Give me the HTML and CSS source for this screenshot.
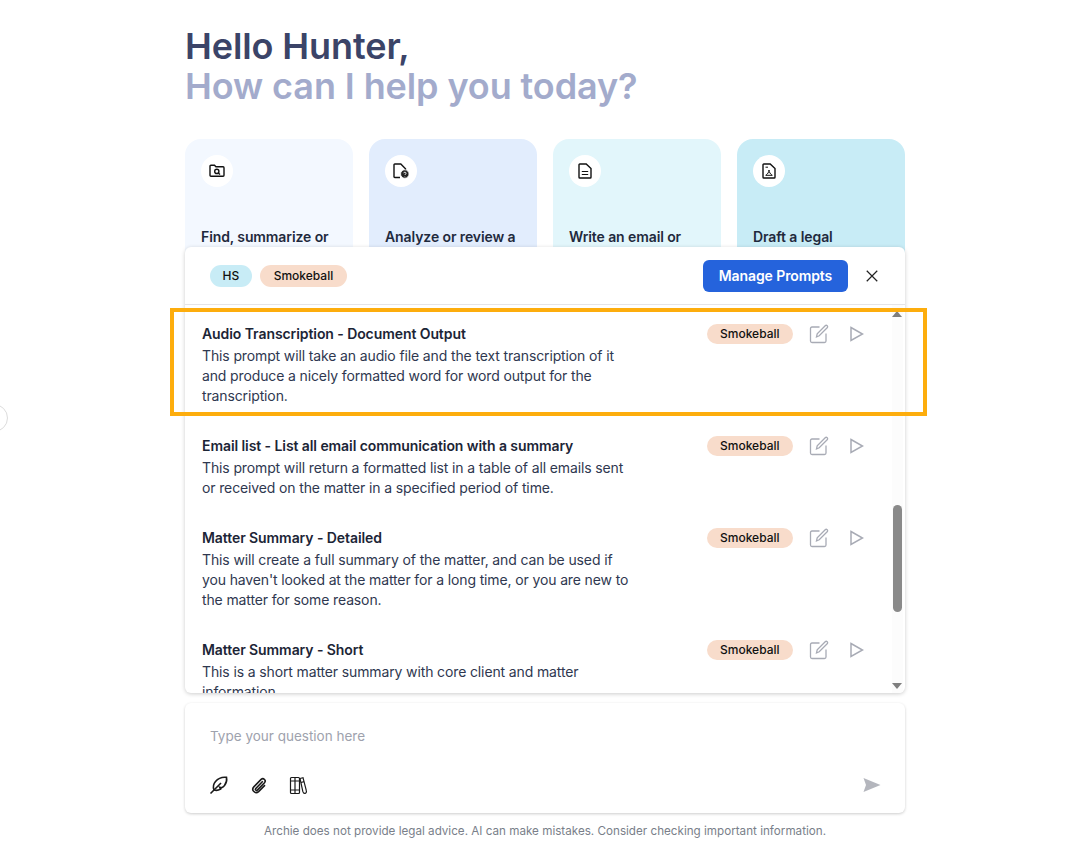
FILE: index.html
```html
<!DOCTYPE html>
<html lang="en">
<head>
    <meta charset="UTF-8">
    <title>Archie</title>
    <link rel="stylesheet" href="styles.css">
</head>
<body>
    <div class="side-toggle"></div>

    <main class="chat">
        <h1 class="greeting">
            <span class="greeting-name">Hello Hunter,</span>
            <span class="greeting-ask">How can I help you today?</span>
        </h1>

        <div class="cards">
            <div class="card card-1">
                <div class="card-icon">
                    <svg viewBox="0 0 16 16" class="icon-16"><path d="M1 3.2c0-.5.4-.9.9-.9h3.600l1.400 1.500h7.200c.5 0 .9.4.9.900v7.600c0 .5-.4.900-.9.900H1.900c-.5 0-.9-.4-.9-.900z"/><circle cx="7.800" cy="8.400" r="2.100"/><path d="M9.300 9.900l1.700 1.600"/></svg>
                </div>
                <div class="card-text">Find, summarize or</div>
            </div>
            <div class="card card-2">
                <div class="card-icon">
                    <svg viewBox="0 0 16 16" class="icon-16"><path d="M7 14.500H1.800c-.4 0-.8-.4-.8-.8V1.800c0-.4.4-.8.8-.8h6l4.700 4.700v1.800"/><circle cx="11.800" cy="11" r="4.200" class="solid"/><path class="mark" d="M10.600 10.200c.2-1.400 2.500-1.300 2.500 0 0 .9-1.200 1-1.300 1.800M11.800 13.200v.4"/></svg>
                </div>
                <div class="card-text">Analyze or review a</div>
            </div>
            <div class="card card-3">
                <div class="card-icon">
                    <svg viewBox="0 0 16 16" class="icon-16"><path d="M2 1.800c0-.5.4-.8.8-.8h6.400L14 5.600v8.600c0 .5-.4.800-.8.800H2.800c-.4 0-.8-.3-.8-.8z"/><path class="thin" d="M4.800 8.500h6.400M4.800 11.500h6.400"/></svg>
                </div>
                <div class="card-text">Write an email or</div>
            </div>
            <div class="card card-4">
                <div class="card-icon">
                    <svg viewBox="0 0 16 16" class="icon-16"><path d="M2 1.800c0-.5.4-.8.8-.8h6.400L14 5.600v8.600c0 .5-.4.800-.8.800H2.800c-.4 0-.8-.3-.8-.8z"/><path class="thin" d="M4.500 4.200h2.500M4.500 12.300h7M8 7c0 2.200-1.500 4-3 5.300M8 7c0 2.200 1.500 4 3 5.300"/></svg>
                </div>
                <div class="card-text">Draft a legal</div>
            </div>
        </div>

        <div class="composer-wrap">
            <section class="prompts">
                <header class="prompts-head">
                    <div class="pill pill-blue">HS</div>
                    <div class="pill pill-peach pill-head">Smokeball</div>
                    <button class="manage-btn">Manage Prompts</button>
                    <svg viewBox="0 0 16 16" class="close-icon"><path d="M2 2l12 12M14 2L2 14"/></svg>
                </header>

                <div class="prompt-list">
                    <div class="prompt-row">
                        <div class="prompt-body">
                            <div class="prompt-title">Audio Transcription - Document Output</div>
                            <p class="prompt-desc">This prompt will take an audio file and the text transcription of it and produce a nicely formatted word for word output for the transcription.</p>
                        </div>
                        <div class="pill pill-peach">Smokeball</div>
                        <svg viewBox="0 0 20 20" class="edit-icon"><path d="M10.500 3H3c-1 0-1.500.5-1.500 1.500V17c0 1 .5 1.500 1.500 1.500h12.500c1 0 1.500-.5 1.500-1.500V9.500"/><path d="M7.500 13l.7-3.200 8-8c.6-.6 1.400-.6 2 0s.6 1.400 0 2l-8 8z"/></svg>
                        <svg viewBox="0 0 14 16" class="play-icon"><path d="M1 1.500L12.500 8 1 14.500z"/></svg>
                    </div>
                    <div class="prompt-row">
                        <div class="prompt-body">
                            <div class="prompt-title">Email list - List all email communication with a summary</div>
                            <p class="prompt-desc">This prompt will return a formatted list in a table of all emails sent or received on the matter in a specified period of time.</p>
                        </div>
                        <div class="pill pill-peach">Smokeball</div>
                        <svg viewBox="0 0 20 20" class="edit-icon"><path d="M10.500 3H3c-1 0-1.500.5-1.500 1.500V17c0 1 .5 1.500 1.500 1.500h12.500c1 0 1.500-.5 1.500-1.500V9.500"/><path d="M7.500 13l.7-3.200 8-8c.6-.6 1.400-.6 2 0s.6 1.400 0 2l-8 8z"/></svg>
                        <svg viewBox="0 0 14 16" class="play-icon"><path d="M1 1.500L12.500 8 1 14.500z"/></svg>
                    </div>
                    <div class="prompt-row">
                        <div class="prompt-body">
                            <div class="prompt-title">Matter Summary - Detailed</div>
                            <p class="prompt-desc">This will create a full summary of the matter, and can be used if you haven't looked at the matter for a long time, or you are new to the matter for some reason.</p>
                        </div>
                        <div class="pill pill-peach">Smokeball</div>
                        <svg viewBox="0 0 20 20" class="edit-icon"><path d="M10.500 3H3c-1 0-1.500.5-1.500 1.500V17c0 1 .5 1.500 1.500 1.500h12.500c1 0 1.500-.5 1.500-1.500V9.500"/><path d="M7.500 13l.7-3.200 8-8c.6-.6 1.400-.6 2 0s.6 1.400 0 2l-8 8z"/></svg>
                        <svg viewBox="0 0 14 16" class="play-icon"><path d="M1 1.500L12.500 8 1 14.500z"/></svg>
                    </div>
                    <div class="prompt-row">
                        <div class="prompt-body">
                            <div class="prompt-title">Matter Summary - Short</div>
                            <p class="prompt-desc">This is a short matter summary with core client and matter information.</p>
                        </div>
                        <div class="pill pill-peach">Smokeball</div>
                        <svg viewBox="0 0 20 20" class="edit-icon"><path d="M10.500 3H3c-1 0-1.500.5-1.500 1.500V17c0 1 .5 1.500 1.500 1.500h12.500c1 0 1.500-.5 1.500-1.500V9.500"/><path d="M7.500 13l.7-3.200 8-8c.6-.6 1.400-.6 2 0s.6 1.400 0 2l-8 8z"/></svg>
                        <svg viewBox="0 0 14 16" class="play-icon"><path d="M1 1.500L12.500 8 1 14.500z"/></svg>
                    </div>
                </div>

                <div class="scrollbar">
                    <div class="arrow-up"></div>
                    <div class="scroll-thumb"></div>
                    <div class="arrow-down"></div>
                </div>
            </section>

            <section class="composer">
                <div class="composer-input">Type your question here</div>
                <div class="composer-tools">
                    <svg viewBox="0 0 20 20" class="tool-icon"><path d="M1.500 18.500L12 8"/><path d="M5 15c-1.200-3-.6-6 1.500-8.500C9 3.500 13.500 1.800 17.500 2.300c.6 3-.4 6-2 8.200-.8 1-1.900 1.800-3 2.300l-1.800-.5.900 1.700c-2 1.300-4.500 1.600-6.600 1z"/></svg>
                    <svg viewBox="0 0 20 20" class="tool-icon clip"><path d="M13.800 6.200l-7 7.300c-1 1.100.3 2.600 1.500 1.600l7.200-7.400c2-2.200-1-5.400-3.400-3.300l-7.300 7.500c-3 3.200 1.600 7.600 4.800 4.700l6.400-6.500"/></svg>
                    <svg viewBox="0 0 20 20" class="tool-icon books"><path d="M1.500 3.500c0-.5.3-1 1-1h7c.6 0 1 .5 1 1v14c0 .5-.4 1-1 1h-7c-.7 0-1-.5-1-1z"/><path d="M6 2.500v16M1.500 6h9M1.500 15h9"/><path d="M11 3.500l3-.8 3.200 12.500c.5 1.500.3 2.800-1 3.200-1.300.3-2-.6-2.400-2z"/><path d="M12 7.500l3-.8"/></svg>
                    <svg viewBox="0 0 18 16" class="send-icon"><path d="M.5 1l17 7-17 7 2.500-7z"/></svg>
                </div>
            </section>
            <p class="disclaimer">Archie does not provide legal advice. AI can make mistakes. Consider checking important information.</p>
        </div>
    </main>

    <div class="highlight"></div>
</body>
</html>
```

FILE: styles.css
```css
* {
    margin: 0;
    padding: 0;
    box-sizing: border-box;
}

html, body {
    height: 100%;
    overflow: hidden;
}

body {
    font-family: "Inter", "Liberation Sans", sans-serif;
    background: #ffffff;
    color: #1c2536;
    position: relative;
}

.side-toggle {
    position: absolute;
    left: -20px;
    top: 404px;
    width: 28px;
    height: 28px;
    border: 1px solid #dcdcdc;
    border-radius: 50%;
    background: #ffffff;
}

.chat {
    width: 720px;
    height: 841px;
    margin-left: 185px;
    padding-top: 26px;
    display: flex;
    flex-direction: column;
}

.greeting {
    font-size: 36px;
    line-height: 40px;
    font-weight: 600;
    margin-bottom: 33px;
    letter-spacing: -0.1px;
}

.greeting-name {
    display: block;
    color: #3b4468;
}

.greeting-ask {
    display: block;
    color: #a3abcc;
}

.cards {
    display: grid;
    grid-template-columns: repeat(4, 168px);
    gap: 16px;
    height: 150px;
}

.card {
    border-radius: 16px 16px 0 0;
    padding: 16px;
}

.card-1 { background: #f3f8ff; }
.card-2 { background: #e2edfd; }
.card-3 { background: #e2f6fb; }
.card-4 { background: #c8ecf6; }

.card-icon {
    width: 32px;
    height: 32px;
    border-radius: 50%;
    background: #ffffff;
    display: flex;
    align-items: center;
    justify-content: center;
    margin-bottom: 38px;
}

.icon-16 {
    width: 16px;
    height: 16px;
    fill: none;
    stroke: #111111;
    stroke-width: 1.4;
}

.icon-16 .thin {
    stroke-width: 1;
}

.icon-16 .solid {
    fill: #222222;
    stroke: #ffffff;
    stroke-width: 0.8;
}

.icon-16 .mark {
    stroke: #ffffff;
    stroke-width: 0.9;
}

.card-text {
    font-size: 14px;
    line-height: 24px;
    font-weight: 600;
    letter-spacing: -0.1px;
    color: #1f2a3d;
}

.composer-wrap {
    margin-top: auto;
    position: relative;
}

.prompts {
    position: absolute;
    left: 0;
    right: 0;
    bottom: 148px;
    height: 446px;
    background: #ffffff;
    border-radius: 6px;
    box-shadow: 0 1px 4px rgba(0, 0, 0, 0.2);
    overflow: hidden;
}

.prompts-head {
    height: 58px;
    padding: 0 24px 0 25px;
    display: flex;
    align-items: center;
    gap: 8px;
    border-bottom: 1px solid #e4e4e7;
}

.pill {
    height: 22px;
    padding: 0 13px;
    border-radius: 11px;
    font-size: 12px;
    font-weight: 500;
    line-height: 22px;
    color: #111111;
    white-space: nowrap;
}

.pill-blue {
    background: #c8ecf6;
    padding: 0 12.5px;
}

.pill-peach {
    background: #f8dccb;
}

.pill-head {
    padding: 0 14px;
}

.manage-btn {
    margin-left: auto;
    width: 145px;
    height: 32px;
    border: none;
    border-radius: 6px;
    background: #2563dc;
    color: #ffffff;
    font-family: inherit;
    font-size: 14px;
    font-weight: 600;
    letter-spacing: -0.1px;
}

.close-icon {
    width: 14px;
    height: 14px;
    margin-left: 9px;
    margin-right: 2px;
    fill: none;
    stroke: #222222;
    stroke-width: 1.4;
}

.prompt-list {
    height: 388px;
    overflow: hidden;
    padding-top: 3px;
}

.prompt-row {
    display: flex;
    align-items: flex-start;
    padding: 14px 41px 14px 17px;
}

.prompt-body {
    width: 505px;
}

.prompt-title {
    font-size: 14px;
    line-height: 24px;
    font-weight: 600;
    letter-spacing: -0.08px;
    color: #1c2536;
}

.prompt-desc {
    font-size: 14px;
    line-height: 20px;
    letter-spacing: -0.13px;
    color: #2f3850;
    max-width: 435px;
}

.prompt-row .pill {
    margin-top: 2px;
    height: 20px;
    line-height: 20px;
}

.edit-icon {
    width: 20px;
    height: 20px;
    margin: 2px 0 0 16px;
    fill: none;
    stroke: #a8abb5;
    stroke-width: 1.3;
}

.play-icon {
    width: 14px;
    height: 16px;
    margin: 4px 0 0 21px;
    fill: none;
    stroke: #a8abb5;
    stroke-width: 1.5;
}

.scrollbar {
    position: absolute;
    top: 58px;
    right: 2px;
    bottom: 0;
    width: 11px;
    background: #fcfcfc;
}

.arrow-up,
.arrow-down {
    position: absolute;
    left: 0;
    width: 0;
    height: 0;
    border-left: 5px solid transparent;
    border-right: 5px solid transparent;
}

.arrow-up {
    top: 6px;
    border-bottom: 6px solid #7f7f7f;
}

.arrow-down {
    bottom: 4px;
    border-top: 6px solid #7f7f7f;
}

.scroll-thumb {
    position: absolute;
    top: 200px;
    left: 1px;
    width: 9px;
    height: 107px;
    border-radius: 5px;
    background: #8a8a8a;
}

.composer {
    height: 110px;
    padding: 23px 24px 0;
    border-radius: 6px;
    background: #ffffff;
    box-shadow: 0 1px 3px rgba(0, 0, 0, 0.2);
}

.composer-input {
    padding-left: 1px;
    font-size: 13.5px;
    line-height: 20px;
    color: #9ea2ad;
}

.composer-tools {
    display: flex;
    align-items: center;
    gap: 20px;
    margin-top: 29px;
}

.tool-icon {
    width: 20px;
    height: 20px;
    fill: none;
    stroke: #1a1a1a;
    stroke-width: 1.6;
}

.tool-icon.books {
    stroke-width: 1.2;
}

.send-icon {
    width: 18px;
    height: 16px;
    margin-left: auto;
    fill: #b4b6bd;
}

.disclaimer {
    height: 28px;
    padding-top: 10px;
    text-align: center;
    font-size: 11.67px;
    line-height: 16px;
    color: #7a7f8a;
}

.highlight {
    position: absolute;
    left: 170px;
    top: 308px;
    width: 757px;
    height: 108px;
    border: 4px solid #fdad0d;
}
```
